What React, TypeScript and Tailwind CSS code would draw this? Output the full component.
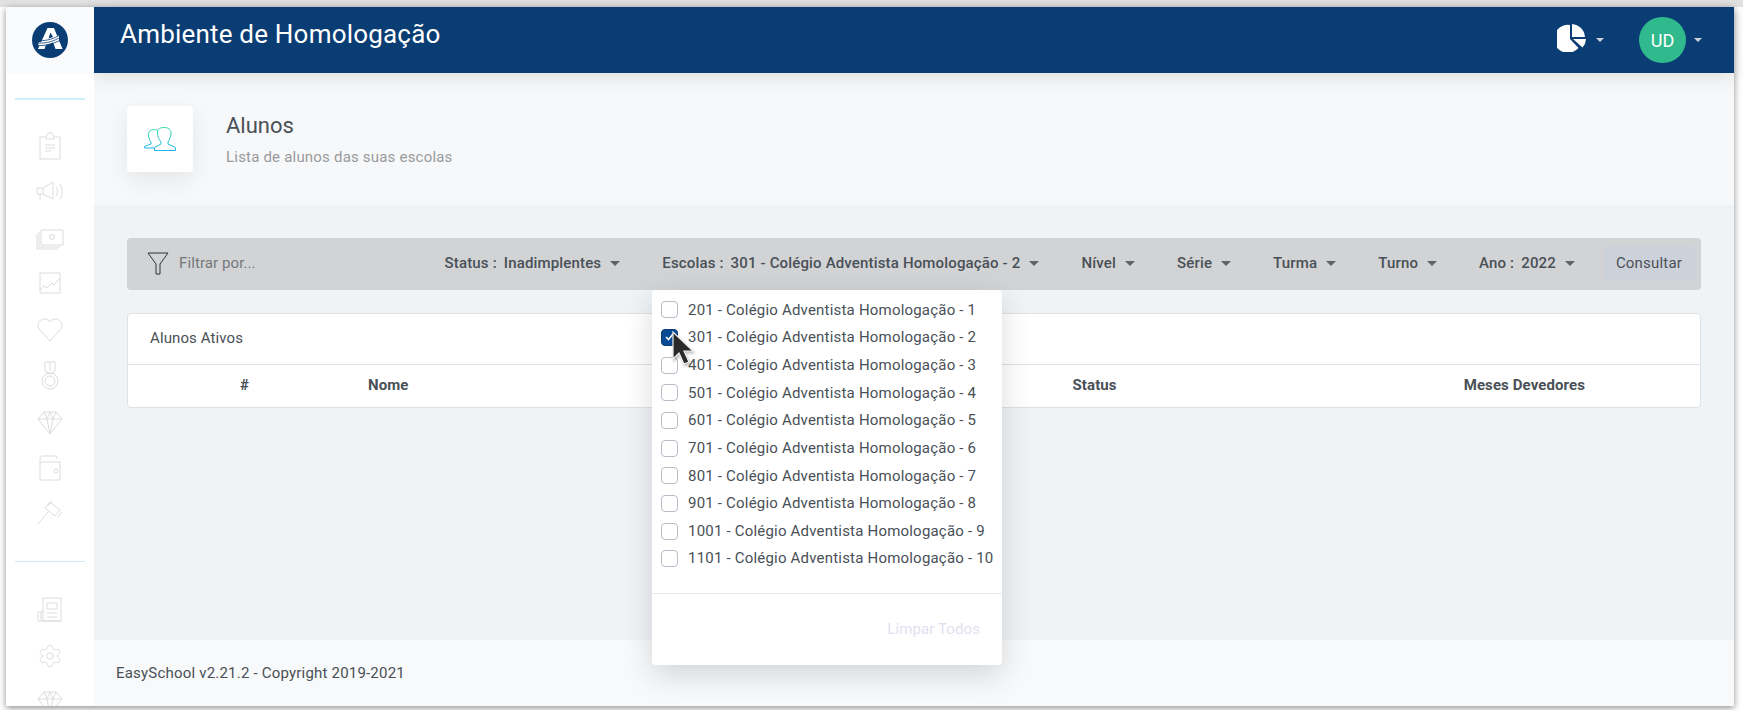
import { useState } from "react";
import { Settings } from "lucide-react";

const escolas = [
  "201 - Colégio Adventista Homologação - 1",
  "301 - Colégio Adventista Homologação - 2",
  "401 - Colégio Adventista Homologação - 3",
  "501 - Colégio Adventista Homologação - 4",
  "601 - Colégio Adventista Homologação - 5",
  "701 - Colégio Adventista Homologação - 6",
  "801 - Colégio Adventista Homologação - 7",
  "901 - Colégio Adventista Homologação - 8",
  "1001 - Colégio Adventista Homologação - 9",
  "1101 - Colégio Adventista Homologação - 10",
];

const Ico = ({ children }: { children: React.ReactNode }) => (
  <div className="flex h-[46px] w-full items-center justify-center">
    <svg width="30" height="30" viewBox="0 0 30 30" fill="none" stroke="#dcdcdc" strokeWidth="1">
      {children}
    </svg>
  </div>
);

function Caret() {
  return <span className="ml-[9px] inline-block h-0 w-0 border-x-[5px] border-t-[5px] border-x-transparent border-t-[#5f6368]" />;
}

function FilterItem({ label, value }: { label: string; value?: string }) {
  return (
    <div className="flex items-center whitespace-nowrap text-[15px] font-medium tracking-[0.16px] text-[#495057]">
      <span>{label}</span>
      {value && <span className="ml-[7px]">{value}</span>}
      <Caret />
    </div>
  );
}

function Diamond() {
  return (
    <Ico>
      <path d="M9 5h12l6 7-12 15L3 12zM3 12h24M9 5l3 7 3 15 3-15 3-7M12 12l3-7 3 7" />
    </Ico>
  );
}

function Sidebar() {
  return (
    <aside className="z-20 flex w-[88px] shrink-0 flex-col overflow-hidden bg-white">
      <div className="flex h-[66px] shrink-0 items-center justify-center bg-[#f9fbfd]">
        <svg width="36" height="36" viewBox="0 0 36 36">
          <circle cx="18" cy="18" r="18" fill="#0a3d73" />
          <path d="M15.500 6h6.500l8.500 21h-7l-2.500-7h-6l-2.500 7H6z" fill="#fff" />
          <path d="M18.500 10.500l-2 6 4.500-1.500z" fill="#0a3d73" />
          <path d="M7 20c7 1 14-3 20-7v5c-7 3-14 6-21 6z" fill="#fff" />
          <path d="M8 18.500c7 .5 14-2 20-5.500M7 21c8 .5 15-2 22-6M6 23.500c8 .5 16-2 24-6" stroke="#0a3d73" strokeWidth="0.8" fill="none" />
        </svg>
      </div>
      <div className="mx-[9px] mt-[25px] h-[1.5px] shrink-0 bg-[#cdf1fb]" />
      <div className="mt-[23px] flex flex-col items-center">
        <Ico>
          <path d="M5 6h6M19 6h6v22H5V6M11 8V6c0-2 2-2 2-4h4c0 2 2 2 2 4v2zM10 14h10M10 17h10M10 20h6" />
        </Ico>
        <Ico>
          <path d="M2 11h6v6H2zM8 11l10-6v17l-10-5M5 17v6M21 10c2 3 2 6 0 9M25 7c3 5 3 10 0 15" />
        </Ico>
        <Ico>
          <path d="M6 7h22v15H6zM4 9v15h21M2 11v15h21" />
          <circle cx="17" cy="14" r="2.500" />
        </Ico>
        <Ico>
          <path d="M5 4h20v20H5zM5 21l4-4 3 2 5-5 2 2 6-7" />
        </Ico>
        <Ico>
          <path d="M15 26L4 14C1 9 5 4 9 4c3 0 5 1 6 3 1-2 3-3 6-3 4 0 8 5 5 10z" />
        </Ico>
        <Ico>
          <path d="M10 1h10v9l-5 3-5-3zM15 1v9" />
          <circle cx="15" cy="20" r="8" />
          <circle cx="15" cy="20" r="5" />
        </Ico>
        <Diamond />
        <Ico>
          <path d="M5 9h20v18H5zM5 9V6c0-2 1-3 3-3h13c1 0 1 1 1 3" />
          <circle cx="21" cy="18" r="2" />
        </Ico>
        <Ico>
          <path d="M15 3l10 8-5 6-10-8zM13 13L3 25" />
          <path d="M17 2l-4 5M27 13l-4 5" />
        </Ico>
      </div>
      <div className="mx-[9px] mt-[24px] h-px shrink-0 bg-[#cdeaf5]" />
      <div className="mt-[25px] flex flex-col items-center">
        <Ico>
          <path d="M8 26V3h18v23zM8 17H3v9h24M6 17v9M12 8h10v6H12zM12 18h10M12 22h10" />
        </Ico>
        <div className="flex h-[46px] w-full items-center justify-center">
          <Settings size={26} strokeWidth={0.9} color="#dcdcdc" />
        </div>
        <Diamond />
      </div>
    </aside>
  );
}

function Header() {
  return (
    <header className="relative z-10 flex h-[66px] shrink-0 items-center bg-[#0a3d73] pl-[26px] pr-[32px] text-white shadow-[0_4px_18px_rgba(0,0,0,0.1)]">
      <h1 className="-mt-[12px] text-[26px] font-normal tracking-[0.2px]">Ambiente de Homologação</h1>
      <div className="ml-auto flex items-center">
        <svg className="-mt-[4px]" width="29" height="28" viewBox="0 0 29 28" fill="#fff">
          <path d="M13 1v14l8.500 9A14 14 0 1 1 13 1z" />
          <path d="M15 0a14 14 0 0 1 13 13H15z" />
          <path d="M16 15h13a14 14 0 0 1-3.500 8.500z" />
        </svg>
        <span className="ml-[10px] inline-block h-0 w-0 border-x-[4px] border-t-[4px] border-x-transparent border-t-[#c9d1dc]" />
        <div className="ml-[35px] flex h-[46px] w-[47px] items-center justify-center rounded-full bg-[#30b98c] text-[18px]">UD</div>
        <span className="ml-[8px] inline-block h-0 w-0 border-x-[4px] border-t-[4px] border-x-transparent border-t-[#c9d1dc]" />
      </div>
    </header>
  );
}

export default function App() {
  const [selected] = useState("301 - Colégio Adventista Homologação - 2");

  return (
    <div className="relative h-[710px] w-[1743px] overflow-hidden bg-white font-['Roboto',sans-serif]">
      <div className="absolute left-0 right-0 top-0 h-[7px] bg-[#e2e2e2]" />
      <div className="absolute bottom-[4px] left-[6px] right-[9px] top-[7px] flex bg-white shadow-[0_2px_7px_rgba(0,0,0,0.45)]">
        <Sidebar />
        <div className="flex min-w-0 flex-1 flex-col bg-[#f0f3f6]">
          <Header />
          <div className="flex h-[132px] shrink-0 bg-[#f7f8fa] pl-[33px] pt-[33px]">
            <div className="flex h-[66px] w-[66px] items-center justify-center rounded bg-white shadow-[0_8px_24px_rgba(0,0,0,0.08)]">
              <svg width="32" height="24" viewBox="0 0 32 24" fill="none" strokeWidth="1">
                <defs>
                  <linearGradient id="g" x1="0" y1="0" x2="0" y2="1">
                    <stop offset="0" stopColor="#30d9a9" />
                    <stop offset="1" stopColor="#1eb6ee" />
                  </linearGradient>
                </defs>
                <path d="M14 4C12.500 2.800 11 2.500 9.500 2.500 6 2.500 4.500 5 4.500 8c0 3 1 5 2.500 7v2L.5 19.500V21H10" stroke="url(#g)" />
                <path d="M17 15c-2.500-3-3.500-6-3.500-9 0-4 2.500-5.500 6.500-5.500S27 2 27 6c0 3-1 6-3 9v2l7.500 3.500v3h-21v-3L17 17z" stroke="url(#g)" />
              </svg>
            </div>
            <div className="ml-[33px]">
              <div className="mt-[3px] text-[22px] leading-[34px] text-[#495057]">Alunos</div>
              <div className="mt-[3px] text-[15px] tracking-[0.2px] text-[#999a9c]">Lista de alunos das suas escolas</div>
            </div>
          </div>

          <div className="flex flex-1 flex-col px-[33px] pt-[33px]">
            <div className="flex h-[52px] items-center rounded bg-[#d2d3d5] pl-[20px] pr-[6px]">
              <svg width="22" height="24" viewBox="0 0 22 24" fill="none" stroke="#333" strokeWidth="1">
                <path d="M1 1h20l-8 11v10H9V12z" />
              </svg>
              <span className="ml-[10px] pb-[1px] text-[15px] tracking-[0.1px] text-[#75787c]">Filtrar por...</span>
              <div className="ml-auto flex items-center gap-[42px] pb-[1px]">
                <FilterItem label="Status :" value="Inadimplentes" />
                <FilterItem label="Escolas :" value="301 - Colégio Adventista Homologação - 2" />
                <FilterItem label="Nível" />
                <FilterItem label="Série" />
                <FilterItem label="Turma" />
                <FilterItem label="Turno" />
                <FilterItem label="Ano :" value="2022" />
                <button className="-ml-[14px] h-[35px] w-[92px] rounded bg-[#cdd2da] text-[15px] tracking-[0.2px] text-[#495057]">Consultar</button>
              </div>
            </div>

            <div className="mt-[23px] rounded border border-[#dfe1e4] bg-white">
              <div className="flex h-[51px] items-center border-b border-[#dfe1e4] pb-[2px] pl-[22px] text-[15px] tracking-[0.1px] text-[#495057]">Alunos Ativos</div>
              <div className="flex h-[42px] items-center pb-[1px] text-[15px] font-bold tracking-[0.1px] text-[#495057]">
                <span className="ml-[112px]">#</span>
                <span className="ml-[119px]">Nome</span>
                <span className="ml-[664px]">Status</span>
                <span className="ml-[347px]">Meses Devedores</span>
              </div>
            </div>
          </div>

          <div className="flex h-[66px] shrink-0 items-center bg-[#f8f9fb] pl-[22px] text-[15px] tracking-[0.2px] text-[#495057]">
            EasySchool v2.21.2 - Copyright 2019-2021
          </div>
        </div>
      </div>

      {/* dropdown aberto */}
      <div className="absolute left-[652px] top-[290px] z-20 h-[375px] w-[350px] rounded bg-white shadow-[0_10px_30px_rgba(0,0,0,0.15)]">
        <div className="pl-[9px] pt-[6px]">
          {escolas.map((e) => (
            <div key={e} className="flex h-[27.67px] items-center text-[15px] tracking-[0.2px] text-[#495057]">
              <span className={`flex h-[17px] w-[17px] items-center justify-center rounded-[4px] border ${e === selected ? "border-[#0a3d73] bg-[#0a4a94]" : "border-[#b7bcc7] bg-white"}`}>
                {e === selected && (
                  <svg width="9" height="8" viewBox="0 0 9 8" fill="none" stroke="#fff" strokeWidth="1.6">
                    <path d="M1 4l2.500 2.500L8 1" />
                  </svg>
                )}
              </span>
              <span className="ml-[10px]">{e}</span>
            </div>
          ))}
        </div>
        <div className="absolute left-0 right-0 top-[303px] h-px bg-[#e9e9ec]" />
        <div className="absolute right-[22px] top-[328px] text-[15px] tracking-[0.1px] text-[#dfe1f0]">Limpar Todos</div>
      </div>

      {/* cursor do mouse */}
      <svg className="absolute left-[672px] top-[331px] z-30 drop-shadow-[1px_2px_1px_rgba(0,0,0,0.25)]" width="24" height="36" viewBox="0 0 24 36">
        <path d="M1 1v27l6-6 5 11 5-2-5-11h9z" fill="#2a2a2a" stroke="#eee" strokeWidth="1.2" />
      </svg>
    </div>
  );
}
